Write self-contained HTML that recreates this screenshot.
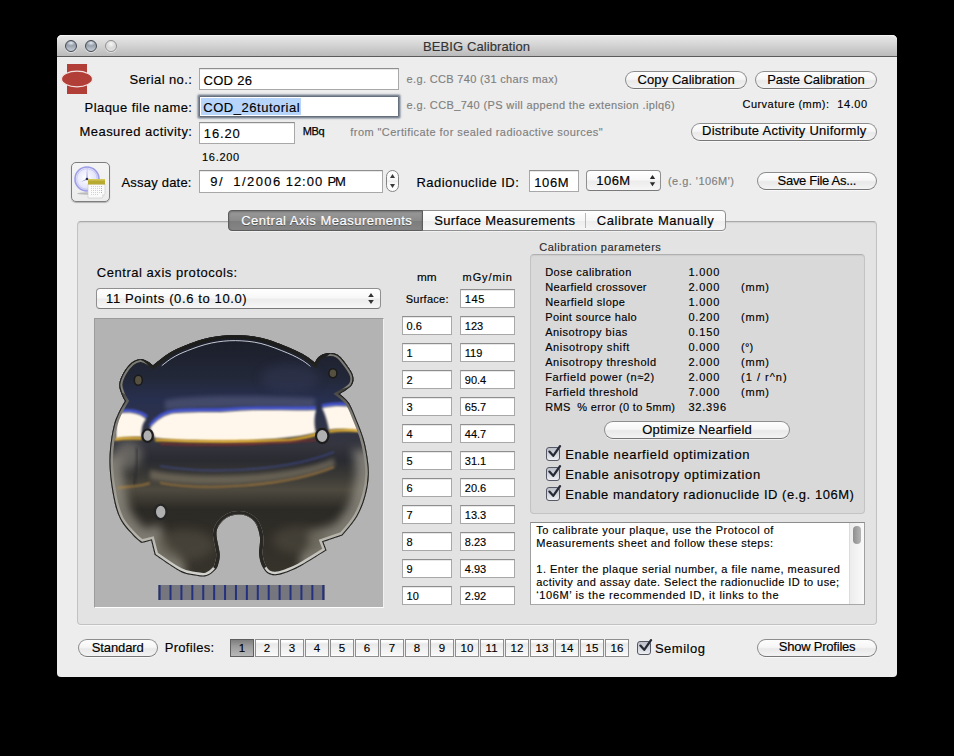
<!DOCTYPE html>
<html><head><meta charset="utf-8"><style>
html,body{margin:0;padding:0;background:#000;width:954px;height:756px;overflow:hidden;}
body{position:relative;font-family:"Liberation Sans",sans-serif;}
.t{position:absolute;white-space:pre;line-height:1;-webkit-text-stroke:0.15px currentColor;}
.a{position:absolute;box-sizing:border-box;}

.win{left:57px;top:35px;width:840px;height:642px;background:#ededed;border-radius:5px 5px 4px 4px;overflow:hidden;}
.title{left:57px;top:35px;width:840px;height:22px;border-radius:5px 5px 0 0;background:linear-gradient(#e9e9e9,#d3d3d3 50%,#bababa);border-bottom:1px solid #5a5a5a;box-shadow:inset 0 1px 0 #f6f6f6;}
.tl{width:12px;height:12px;border-radius:50%;box-sizing:border-box;border:1.3px solid #434a53;box-shadow:0 1px 0 rgba(255,255,255,.5);background:radial-gradient(ellipse 45% 28% at 50% 20%,#e8ecf2 0,rgba(230,234,240,0) 100%),linear-gradient(#7f8996,#9ca5b0 50%,#c6cdd5);}
.tl3{border-color:#909090;background:radial-gradient(circle at 50% 30%,#f6f6f6 0,#d8d8d8 50%,#ececec 100%);}
.tf{background:#fff;border:1px solid #a8a8a8;border-top-color:#8e8e8e;box-shadow:inset 0 1px 0 #e8e8e8;}
.btn{border:1px solid #8d8d8d;border-bottom-color:#777;border-radius:9px;background:linear-gradient(#fdfdfd,#f6f6f6 45%,#e9e9e9 55%,#f3f3f3);box-shadow:0 1px 0 rgba(255,255,255,.6);}
.pop{border:1px solid #8f8f8f;border-bottom-color:#7a7a7a;border-radius:4px;background:linear-gradient(#ffffff,#f8f8f8 45%,#ececec 55%,#f6f6f6);}
.cb{width:14px;height:14px;border:1px solid #555866;border-radius:3px;background:linear-gradient(#bcc0c9,#d4d7de 55%,#eceef2);}
.pb{width:24px;height:18px;border:1px solid #8e8e8e;background:linear-gradient(#ffffff 0,#ffffff 10%,#e8e8e8 25%,#f2f2f2 60%,#f6f6f6 88%,#ffffff 100%);}
.pbs{border-color:#5e5e5e;background:linear-gradient(#7e7e7e,#9c9c9c 40%,#b8b8b8);}

</style></head><body>
<div class='a win'></div><div class='a title'></div><div class='a tl' style='left:65px;top:40px'></div><div class='a tl' style='left:85px;top:40px'></div><div class='a tl tl3' style='left:105px;top:40px'></div><svg class='a' style='left:57px;top:57px' width='40' height='45' viewBox='57 57 40 45'>
<rect x='67' y='64' width='20' height='30' fill='#b13f38'/>
<ellipse cx='77' cy='79' rx='15.5' ry='7.8' fill='#b13f38' stroke='#f2e2e0' stroke-width='1.2'/>
</svg><div class='a tf' style='left:199px;top:68px;width:200px;height:22px'></div><div class='a' style='left:199px;top:96px;width:200px;height:21px;background:#fff;border:1px solid #666f7c;border-radius:1px;box-shadow:0 0 0 1px #848d99, 0 0 1.5px 2px rgba(135,145,160,.7)'></div><div class='a' style='left:201px;top:98px;width:100px;height:17px;background:#b7d4fb'></div><div class='a tf' style='left:199px;top:122px;width:96px;height:22px'></div><div class='a btn' style='left:625px;top:71px;width:122px;height:18px'></div><div class='a btn' style='left:755px;top:71px;width:122px;height:18px'></div><div class='a btn' style='left:691px;top:123px;width:186px;height:18px'></div><div class='a' style='left:71px;top:162px;width:39px;height:40px;border:1px solid #7d7d7d;border-radius:5px;background:linear-gradient(#f4f4f4,#ececec);box-shadow:0 1px 1px rgba(0,0,0,.25)'></div><svg class='a' style='left:71px;top:162px' width='39' height='40' viewBox='71 162 39 40'>
<defs><radialGradient id='clk' cx='0.45' cy='0.45' r='0.6'><stop offset='0' stop-color='#ffffff'/><stop offset='0.7' stop-color='#e4e4fa'/><stop offset='1' stop-color='#b8b8f0'/></radialGradient></defs>
<ellipse cx='87' cy='193.5' rx='10' ry='1.2' fill='#888' opacity='.5'/>
<circle cx='87' cy='179' r='12' fill='url(#clk)' stroke='#9d9de8' stroke-width='1.6'/>
<circle cx='87' cy='179' r='10.3' fill='none' stroke='#c4c4f4' stroke-width='0.8'/>
<path d='M86.3 179 L87.7 179 L87.1 167.5 Z' fill='#a0a0e0'/>
<path d='M87 178.4 L87.4 179.6 L81 182 Z' fill='#8080c8'/>
<circle cx='87' cy='179' r='1.3' fill='#303060'/>
<path d='M88 184 L105 184 L105 194 L102 198 L88 198 Z' fill='#fafafa' stroke='#c8c8c8' stroke-width='0.6'/>
<rect x='88' y='179' width='17' height='5.5' fill='#b8aa30'/>
<rect x='88' y='179' width='17' height='1.5' fill='#d4c85a'/>
<g fill='#d2d2d2' transform='translate(1 0)'>
<rect x='90' y='186' width='1' height='1'/><rect x='92' y='186' width='1' height='1'/><rect x='94' y='186' width='1' height='1'/><rect x='96' y='186' width='1' height='1'/><rect x='98' y='186' width='1' height='1'/><rect x='100' y='186' width='1' height='1' fill='#a8a8f0'/>
<rect x='90' y='188' width='1' height='1'/><rect x='92' y='188' width='1' height='1'/><rect x='94' y='188' width='1' height='1'/><rect x='96' y='188' width='1' height='1'/><rect x='98' y='188' width='1' height='1'/><rect x='100' y='188' width='1' height='1' fill='#a8a8f0'/>
<rect x='90' y='190' width='1' height='1'/><rect x='92' y='190' width='1' height='1'/><rect x='94' y='190' width='1' height='1'/><rect x='96' y='190' width='1' height='1'/><rect x='98' y='190' width='1' height='1'/><rect x='100' y='190' width='1' height='1' fill='#a8a8f0'/>
<rect x='90' y='192' width='1' height='1'/><rect x='92' y='192' width='1' height='1'/><rect x='94' y='192' width='1' height='1'/><rect x='96' y='192' width='1' height='1'/><rect x='98' y='192' width='1' height='1'/><rect x='100' y='192' width='1' height='1' fill='#a8a8f0'/>
<rect x='90' y='194' width='1' height='1'/><rect x='92' y='194' width='1' height='1'/><rect x='94' y='194' width='1' height='1'/><rect x='96' y='194' width='1' height='1'/>
</g>
<path d='M102 198 L105 194 L102 194.5 Z' fill='#e0e0e0'/>
</svg><div class='a tf' style='left:199px;top:170px;width:184px;height:23px'></div><div class='a' style='left:386px;top:170px;width:13px;height:22px;border:1px solid #858585;border-radius:6.5px;background:linear-gradient(#ffffff,#f8f8f8 45%,#ececec 50%,#f8f8f8 60%,#ffffff)'></div><svg class='a' style='left:386px;top:170px' width='13' height='22' viewBox='0 0 13 22'>
<path d='M6.5 4 L9 8 L4 8 Z' fill='#3a3a3a'/><path d='M6.5 18 L9 14 L4 14 Z' fill='#3a3a3a'/></svg><div class='a tf' style='left:529px;top:170px;width:50px;height:22px'></div><div class='a pop' style='left:586px;top:170px;width:75px;height:21px'></div><svg class='a' style='left:646px;top:172px' width='12' height='18' viewBox='0 0 12 18'>
<path d='M6.5 3 L9.2 7 L3.8 7 Z' fill='#2a2a2a'/><path d='M6.5 14.2 L9.2 10.2 L3.8 10.2 Z' fill='#2a2a2a'/></svg><div class='a btn' style='left:757px;top:172px;width:120px;height:18px'></div><div class='a' style='left:77px;top:221px;width:800px;height:404px;border:1px solid #c2c2c2;border-top-color:#a9a9a9;border-radius:4px;background:#e3e3e3;box-shadow:inset 0 1px 1px rgba(0,0,0,.08), 0 1px 0 #f6f6f6'></div><div class='a' style='left:228px;top:210px;width:498px;height:21px;border:1px solid #8f8f8f;border-radius:4px;background:linear-gradient(#ffffff,#f7f7f7 50%,#ededed 51%,#f6f6f6);box-shadow:0 1px 0 rgba(255,255,255,.5)'></div><div class='a' style='left:228px;top:210px;width:195px;height:21px;border:1px solid #5c5c5c;border-radius:4px 0 0 4px;background:linear-gradient(#9a9a9a,#8a8a8a 50%,#7c7c7c 51%,#858585);box-shadow:inset 0 1px 2px rgba(0,0,0,.25)'></div><div class='a' style='left:585px;top:213px;width:1px;height:15px;background:#b8b8b8'></div><div class='a pop' style='left:96px;top:288px;width:285px;height:21px'></div><svg class='a' style='left:366px;top:290px' width='12' height='18' viewBox='0 0 12 18'>
<path d='M5 3 L7.8 7 L2.2 7 Z' fill='#333'/><path d='M5 14 L7.8 10 L2.2 10 Z' fill='#333'/></svg><div class='a' style='left:94px;top:318px;width:290px;height:290px;border:1px solid #9b9b9b;border-bottom-color:#fdfdfd;border-right-color:#f0f0f0;background:#b3b3b3'></div><svg class='a' style='left:95px;top:319px' width='288' height='288' viewBox='95 319 288 288'>
<defs>
<clipPath id='pc'><path d='M235.3 335.0 C244.0 335.1 252.9 335.8 262.0 338.0 C271.1 340.2 282.7 345.0 290.0 348.0 C297.3 351.0 301.8 353.5 305.9 356.0 C310.0 358.5 314.9 362.8 314.9 362.8 C314.9 362.8 316.6 358.5 318.6 356.9 C320.6 355.3 323.8 353.5 327.0 353.2 C330.2 352.9 334.2 352.8 337.6 354.8 C341.0 356.8 344.5 361.9 347.1 365.4 C349.7 368.9 352.3 372.6 353.0 376.0 C353.7 379.4 353.6 382.5 351.4 385.5 C349.2 388.5 339.7 394.0 339.7 394.0 C339.7 394.0 346.4 399.0 349.3 403.5 C352.2 408.0 354.8 415.6 357.1 421.2 C359.4 426.8 361.4 431.7 363.0 437.0 C364.6 442.3 365.7 446.7 366.7 452.9 C367.7 459.1 369.0 466.9 368.8 474.0 C368.6 481.1 367.6 488.1 365.6 495.2 C363.7 502.3 361.0 509.7 357.1 516.4 C353.2 523.1 342.3 535.4 342.3 535.4 C342.3 535.4 323.3 541.8 323.3 541.8 C323.3 541.8 326.5 550.3 326.5 550.3 C326.5 550.3 306.9 562.7 300.0 566.5 C293.1 570.3 289.1 571.5 285.0 573.0 C280.9 574.5 278.1 575.2 275.3 575.3 C272.5 575.4 270.0 574.6 268.0 573.5 C266.0 572.4 264.8 570.6 263.5 568.5 C262.2 566.4 261.0 563.7 260.3 561.0 C259.6 558.3 259.2 556.1 259.1 552.2 C259.1 548.3 260.5 542.3 260.0 537.6 C259.5 532.9 258.0 527.5 256.0 524.0 C254.0 520.5 251.0 518.1 248.0 516.5 C245.0 514.9 241.5 514.4 238.2 514.5 C234.9 514.6 231.0 515.4 228.0 517.0 C225.0 518.6 221.9 521.2 220.0 524.0 C218.1 526.8 216.5 528.8 216.4 533.7 C216.3 538.6 219.3 548.6 219.7 553.5 C220.0 558.4 219.2 560.4 218.5 563.0 C217.8 565.6 217.7 567.2 215.7 569.4 C213.7 571.6 209.9 575.0 206.5 576.0 C203.1 577.0 199.4 576.3 195.0 575.5 C190.6 574.7 186.7 574.9 180.0 571.4 C173.3 567.9 154.8 554.8 154.8 554.8 C154.8 554.8 151.2 540.5 151.2 540.5 C151.2 540.5 141.7 542.9 141.7 542.9 C141.7 542.9 136.9 539.7 133.3 535.7 C129.7 531.7 123.6 525.8 120.2 519.0 C116.8 512.2 114.9 505.1 113.1 495.2 C111.3 485.3 109.3 471.4 109.5 459.5 C109.7 447.6 111.7 433.6 114.3 423.8 C116.9 414.1 125.0 401.0 125.0 401.0 C125.0 401.0 122.9 397.8 121.9 395.0 C121.0 392.2 119.0 388.1 119.3 384.4 C119.6 380.7 121.5 376.4 123.5 372.8 C125.5 369.2 128.8 365.1 131.5 362.8 C134.2 360.5 137.3 359.3 139.9 359.0 C142.5 358.7 145.1 360.1 147.3 361.2 C149.5 362.3 153.1 365.4 153.1 365.4 C153.1 365.4 163.2 356.8 168.5 353.5 C173.8 350.2 178.1 348.2 185.0 345.5 C191.9 342.8 201.6 339.2 210.0 337.5 C218.4 335.8 226.6 334.9 235.3 335.0 Z'/></clipPath>
<clipPath id='slt'><rect x='215' y='505' width='50' height='22'/></clipPath>
<mask id='lowmask' maskUnits='userSpaceOnUse' x='95' y='319' width='288' height='288'><path d='M60 455 L185 455 L185 640 L60 640 Z M300 450 L420 450 L420 640 L300 640 Z' fill='#fff' filter='url(#b4)'/></mask>
<clipPath id='tabs'><circle cx='133' cy='377' r='19'/><circle cx='340' cy='370' r='19'/></clipPath>
<clipPath id='ptop'><rect x='158' y='330' width='156' height='40'/></clipPath>
<linearGradient id='pg' x1='0' y1='335' x2='0' y2='577' gradientUnits='userSpaceOnUse'>
<stop offset='0' stop-color='#1a1d28'/>
<stop offset='0.18' stop-color='#232839'/>
<stop offset='0.27' stop-color='#283050'/>
<stop offset='0.45' stop-color='#34353e'/>
<stop offset='0.52' stop-color='#2a2b31'/>
<stop offset='0.58' stop-color='#3a3935'/>
<stop offset='0.64' stop-color='#4e4a40'/>
<stop offset='0.72' stop-color='#2c2a25'/>
<stop offset='1' stop-color='#37342c'/>
</linearGradient>
<linearGradient id='rg' x1='0' y1='335' x2='0' y2='577' gradientUnits='userSpaceOnUse'>
<stop offset='0' stop-color='#1a1a18'/>
<stop offset='0.18' stop-color='#262624'/>
<stop offset='0.32' stop-color='#7c7a74'/>
<stop offset='0.6' stop-color='#9a988e'/>
<stop offset='0.8' stop-color='#b0aea4'/>
<stop offset='1' stop-color='#d4d4d0'/>
</linearGradient>
<filter id='b1' x='-20%' y='-60%' width='140%' height='220%'><feGaussianBlur stdDeviation='1.1'/></filter>
<filter id='b2' x='-20%' y='-60%' width='140%' height='220%'><feGaussianBlur stdDeviation='2.2'/></filter>
<filter id='b4' x='-50%' y='-50%' width='200%' height='200%'><feGaussianBlur stdDeviation='5'/></filter>
</defs>
<g clip-path='url(#pc)'>
<rect x='100' y='330' width='280' height='260' fill='url(#pg)'/>
<path d='M235.3 335.0 C244.0 335.1 252.9 335.8 262.0 338.0 C271.1 340.2 282.7 345.0 290.0 348.0 C297.3 351.0 301.8 353.5 305.9 356.0 C310.0 358.5 314.9 362.8 314.9 362.8 C314.9 362.8 316.6 358.5 318.6 356.9 C320.6 355.3 323.8 353.5 327.0 353.2 C330.2 352.9 334.2 352.8 337.6 354.8 C341.0 356.8 344.5 361.9 347.1 365.4 C349.7 368.9 352.3 372.6 353.0 376.0 C353.7 379.4 353.6 382.5 351.4 385.5 C349.2 388.5 339.7 394.0 339.7 394.0 C339.7 394.0 346.4 399.0 349.3 403.5 C352.2 408.0 354.8 415.6 357.1 421.2 C359.4 426.8 361.4 431.7 363.0 437.0 C364.6 442.3 365.7 446.7 366.7 452.9 C367.7 459.1 369.0 466.9 368.8 474.0 C368.6 481.1 367.6 488.1 365.6 495.2 C363.7 502.3 361.0 509.7 357.1 516.4 C353.2 523.1 342.3 535.4 342.3 535.4 C342.3 535.4 323.3 541.8 323.3 541.8 C323.3 541.8 326.5 550.3 326.5 550.3 C326.5 550.3 306.9 562.7 300.0 566.5 C293.1 570.3 289.1 571.5 285.0 573.0 C280.9 574.5 278.1 575.2 275.3 575.3 C272.5 575.4 270.0 574.6 268.0 573.5 C266.0 572.4 264.8 570.6 263.5 568.5 C262.2 566.4 261.0 563.7 260.3 561.0 C259.6 558.3 259.2 556.1 259.1 552.2 C259.1 548.3 260.5 542.3 260.0 537.6 C259.5 532.9 258.0 527.5 256.0 524.0 C254.0 520.5 251.0 518.1 248.0 516.5 C245.0 514.9 241.5 514.4 238.2 514.5 C234.9 514.6 231.0 515.4 228.0 517.0 C225.0 518.6 221.9 521.2 220.0 524.0 C218.1 526.8 216.5 528.8 216.4 533.7 C216.3 538.6 219.3 548.6 219.7 553.5 C220.0 558.4 219.2 560.4 218.5 563.0 C217.8 565.6 217.7 567.2 215.7 569.4 C213.7 571.6 209.9 575.0 206.5 576.0 C203.1 577.0 199.4 576.3 195.0 575.5 C190.6 574.7 186.7 574.9 180.0 571.4 C173.3 567.9 154.8 554.8 154.8 554.8 C154.8 554.8 151.2 540.5 151.2 540.5 C151.2 540.5 141.7 542.9 141.7 542.9 C141.7 542.9 136.9 539.7 133.3 535.7 C129.7 531.7 123.6 525.8 120.2 519.0 C116.8 512.2 114.9 505.1 113.1 495.2 C111.3 485.3 109.3 471.4 109.5 459.5 C109.7 447.6 111.7 433.6 114.3 423.8 C116.9 414.1 125.0 401.0 125.0 401.0 C125.0 401.0 122.9 397.8 121.9 395.0 C121.0 392.2 119.0 388.1 119.3 384.4 C119.6 380.7 121.5 376.4 123.5 372.8 C125.5 369.2 128.8 365.1 131.5 362.8 C134.2 360.5 137.3 359.3 139.9 359.0 C142.5 358.7 145.1 360.1 147.3 361.2 C149.5 362.3 153.1 365.4 153.1 365.4 C153.1 365.4 163.2 356.8 168.5 353.5 C173.8 350.2 178.1 348.2 185.0 345.5 C191.9 342.8 201.6 339.2 210.0 337.5 C218.4 335.8 226.6 334.9 235.3 335.0 Z' fill='none' stroke='#98948a' stroke-width='26' opacity='.75' filter='url(#b4)' mask='url(#lowmask)'/>
<ellipse cx='128' cy='455' rx='14' ry='14' fill='#8a857a' opacity='.6' filter='url(#b4)'/>

<ellipse cx='185' cy='545' rx='30' ry='16' fill='#5a5548' opacity='.5' filter='url(#b4)'/>
<ellipse cx='300' cy='540' rx='28' ry='14' fill='#5a5548' opacity='.45' filter='url(#b4)'/>
<ellipse cx='290' cy='378' rx='30' ry='14' fill='#343b58' opacity='.45' filter='url(#b4)'/>
<path d='M165 400 C200 394 260 396 315 398 L315 408 C260 406 200 408 165 410 Z' fill='#5a6080' opacity='.55' filter='url(#b2)'/>
<path d='M150 470 C190 480 290 478 334 458 L335 466 C290 486 190 488 150 479 Z' fill='#7a7262' opacity='.7' filter='url(#b2)'/>
<path d='M160 483 C205 491 285 487 334 467' stroke='#c0883a' stroke-width='1.6' fill='none' opacity='.7' filter='url(#b1)'/>
<path d='M160 466 C205 474 285 472 334 452' stroke='#4858b8' stroke-width='1.6' fill='none' opacity='.55' filter='url(#b1)'/>
<path d='M116 412 C128 409 140 411 147 417 M150 426 C156 418 165 412 175 411 C200 409 215 411 235 409 C260 407 290 409 316 408 M322 406 C335 403 350 404 360 406' stroke='#4a5ae0' stroke-width='3.4' fill='none' opacity='.9' filter='url(#b1)'/>
<path d='M116 414 C128 411 140 413 146 419 C142 424 141 430 142 437 C135 437 125 437 116 439 Z' fill='#fff7ec' filter='url(#b1)'/>
<path d='M150 428 C156 420 165 414 175 413 C200 411 215 413 235 411 C260 409 290 411 316 410 C314 418 314 425 316 433 C290 439 250 441 230 441 C205 441 175 441 155 438 C153 434 151 431 150 428 Z' fill='#fff7ec' filter='url(#b1)'/>
<path d='M322 408 C335 405 350 406 360 408 L360 431 C345 429 335 429 329 430 C327 420 325 414 322 408 Z' fill='#fff7ec' filter='url(#b1)'/>
<path d='M114 439.5 C125 438 135 438 142 438.5 M155 440 C200 442 250 442 290 440 C305 438 312 436 317 434 M329 431.5 C340 430 352 430 360 431' stroke='#e8b22c' stroke-width='2.6' fill='none' filter='url(#b1)'/>
<path d='M160 444 C200 445.5 260 445.5 316 440' stroke='#a02a28' stroke-width='1.6' fill='none' opacity='.75' filter='url(#b1)'/>
<path d='M137 448 C138 460 136 475 134 485' stroke='#2a2a30' stroke-width='2.5' fill='none' opacity='.6' filter='url(#b1)'/>
<path d='M118 488 C125 486 135 488 150 483' stroke='#c08a3a' stroke-width='2.2' fill='none' opacity='.6' filter='url(#b1)'/>
<path d='M235.3 335.0 C244.0 335.1 252.9 335.8 262.0 338.0 C271.1 340.2 282.7 345.0 290.0 348.0 C297.3 351.0 301.8 353.5 305.9 356.0 C310.0 358.5 314.9 362.8 314.9 362.8 C314.9 362.8 316.6 358.5 318.6 356.9 C320.6 355.3 323.8 353.5 327.0 353.2 C330.2 352.9 334.2 352.8 337.6 354.8 C341.0 356.8 344.5 361.9 347.1 365.4 C349.7 368.9 352.3 372.6 353.0 376.0 C353.7 379.4 353.6 382.5 351.4 385.5 C349.2 388.5 339.7 394.0 339.7 394.0 C339.7 394.0 346.4 399.0 349.3 403.5 C352.2 408.0 354.8 415.6 357.1 421.2 C359.4 426.8 361.4 431.7 363.0 437.0 C364.6 442.3 365.7 446.7 366.7 452.9 C367.7 459.1 369.0 466.9 368.8 474.0 C368.6 481.1 367.6 488.1 365.6 495.2 C363.7 502.3 361.0 509.7 357.1 516.4 C353.2 523.1 342.3 535.4 342.3 535.4 C342.3 535.4 323.3 541.8 323.3 541.8 C323.3 541.8 326.5 550.3 326.5 550.3 C326.5 550.3 306.9 562.7 300.0 566.5 C293.1 570.3 289.1 571.5 285.0 573.0 C280.9 574.5 278.1 575.2 275.3 575.3 C272.5 575.4 270.0 574.6 268.0 573.5 C266.0 572.4 264.8 570.6 263.5 568.5 C262.2 566.4 261.0 563.7 260.3 561.0 C259.6 558.3 259.2 556.1 259.1 552.2 C259.1 548.3 260.5 542.3 260.0 537.6 C259.5 532.9 258.0 527.5 256.0 524.0 C254.0 520.5 251.0 518.1 248.0 516.5 C245.0 514.9 241.5 514.4 238.2 514.5 C234.9 514.6 231.0 515.4 228.0 517.0 C225.0 518.6 221.9 521.2 220.0 524.0 C218.1 526.8 216.5 528.8 216.4 533.7 C216.3 538.6 219.3 548.6 219.7 553.5 C220.0 558.4 219.2 560.4 218.5 563.0 C217.8 565.6 217.7 567.2 215.7 569.4 C213.7 571.6 209.9 575.0 206.5 576.0 C203.1 577.0 199.4 576.3 195.0 575.5 C190.6 574.7 186.7 574.9 180.0 571.4 C173.3 567.9 154.8 554.8 154.8 554.8 C154.8 554.8 151.2 540.5 151.2 540.5 C151.2 540.5 141.7 542.9 141.7 542.9 C141.7 542.9 136.9 539.7 133.3 535.7 C129.7 531.7 123.6 525.8 120.2 519.0 C116.8 512.2 114.9 505.1 113.1 495.2 C111.3 485.3 109.3 471.4 109.5 459.5 C109.7 447.6 111.7 433.6 114.3 423.8 C116.9 414.1 125.0 401.0 125.0 401.0 C125.0 401.0 122.9 397.8 121.9 395.0 C121.0 392.2 119.0 388.1 119.3 384.4 C119.6 380.7 121.5 376.4 123.5 372.8 C125.5 369.2 128.8 365.1 131.5 362.8 C134.2 360.5 137.3 359.3 139.9 359.0 C142.5 358.7 145.1 360.1 147.3 361.2 C149.5 362.3 153.1 365.4 153.1 365.4 C153.1 365.4 163.2 356.8 168.5 353.5 C173.8 350.2 178.1 348.2 185.0 345.5 C191.9 342.8 201.6 339.2 210.0 337.5 C218.4 335.8 226.6 334.9 235.3 335.0 Z' fill='none' stroke='url(#rg)' stroke-width='7'/>
<path d='M235.3 335.0 C244.0 335.1 252.9 335.8 262.0 338.0 C271.1 340.2 282.7 345.0 290.0 348.0 C297.3 351.0 301.8 353.5 305.9 356.0 C310.0 358.5 314.9 362.8 314.9 362.8 C314.9 362.8 316.6 358.5 318.6 356.9 C320.6 355.3 323.8 353.5 327.0 353.2 C330.2 352.9 334.2 352.8 337.6 354.8 C341.0 356.8 344.5 361.9 347.1 365.4 C349.7 368.9 352.3 372.6 353.0 376.0 C353.7 379.4 353.6 382.5 351.4 385.5 C349.2 388.5 339.7 394.0 339.7 394.0 C339.7 394.0 346.4 399.0 349.3 403.5 C352.2 408.0 354.8 415.6 357.1 421.2 C359.4 426.8 361.4 431.7 363.0 437.0 C364.6 442.3 365.7 446.7 366.7 452.9 C367.7 459.1 369.0 466.9 368.8 474.0 C368.6 481.1 367.6 488.1 365.6 495.2 C363.7 502.3 361.0 509.7 357.1 516.4 C353.2 523.1 342.3 535.4 342.3 535.4 C342.3 535.4 323.3 541.8 323.3 541.8 C323.3 541.8 326.5 550.3 326.5 550.3 C326.5 550.3 306.9 562.7 300.0 566.5 C293.1 570.3 289.1 571.5 285.0 573.0 C280.9 574.5 278.1 575.2 275.3 575.3 C272.5 575.4 270.0 574.6 268.0 573.5 C266.0 572.4 264.8 570.6 263.5 568.5 C262.2 566.4 261.0 563.7 260.3 561.0 C259.6 558.3 259.2 556.1 259.1 552.2 C259.1 548.3 260.5 542.3 260.0 537.6 C259.5 532.9 258.0 527.5 256.0 524.0 C254.0 520.5 251.0 518.1 248.0 516.5 C245.0 514.9 241.5 514.4 238.2 514.5 C234.9 514.6 231.0 515.4 228.0 517.0 C225.0 518.6 221.9 521.2 220.0 524.0 C218.1 526.8 216.5 528.8 216.4 533.7 C216.3 538.6 219.3 548.6 219.7 553.5 C220.0 558.4 219.2 560.4 218.5 563.0 C217.8 565.6 217.7 567.2 215.7 569.4 C213.7 571.6 209.9 575.0 206.5 576.0 C203.1 577.0 199.4 576.3 195.0 575.5 C190.6 574.7 186.7 574.9 180.0 571.4 C173.3 567.9 154.8 554.8 154.8 554.8 C154.8 554.8 151.2 540.5 151.2 540.5 C151.2 540.5 141.7 542.9 141.7 542.9 C141.7 542.9 136.9 539.7 133.3 535.7 C129.7 531.7 123.6 525.8 120.2 519.0 C116.8 512.2 114.9 505.1 113.1 495.2 C111.3 485.3 109.3 471.4 109.5 459.5 C109.7 447.6 111.7 433.6 114.3 423.8 C116.9 414.1 125.0 401.0 125.0 401.0 C125.0 401.0 122.9 397.8 121.9 395.0 C121.0 392.2 119.0 388.1 119.3 384.4 C119.6 380.7 121.5 376.4 123.5 372.8 C125.5 369.2 128.8 365.1 131.5 362.8 C134.2 360.5 137.3 359.3 139.9 359.0 C142.5 358.7 145.1 360.1 147.3 361.2 C149.5 362.3 153.1 365.4 153.1 365.4 C153.1 365.4 163.2 356.8 168.5 353.5 C173.8 350.2 178.1 348.2 185.0 345.5 C191.9 342.8 201.6 339.2 210.0 337.5 C218.4 335.8 226.6 334.9 235.3 335.0 Z' fill='none' stroke='#202020' stroke-width='2'/>
<path d='M263.5 568.5 C262.2 566.4 261.0 563.7 260.3 561.0 C259.6 558.3 259.2 556.1 259.1 552.2 C259.1 548.3 260.5 542.3 260.0 537.6 C259.5 532.9 258.0 527.5 256.0 524.0 C254.0 520.5 251.0 518.1 248.0 516.5 C245.0 514.9 241.5 514.4 238.2 514.5 C234.9 514.6 231.0 515.4 228.0 517.0 C225.0 518.6 221.9 521.2 220.0 524.0 C218.1 526.8 216.5 528.8 216.4 533.7 C216.3 538.6 219.3 548.6 219.7 553.5 C220.0 558.4 219.2 560.4 218.5 563.0 C217.8 565.6 217.7 567.2 215.7 569.4' fill='none' stroke='#2a2824' stroke-width='7' clip-path='url(#pc)'/>
<g clip-path='url(#tabs)'><path d='M235.3 335.0 C244.0 335.1 252.9 335.8 262.0 338.0 C271.1 340.2 282.7 345.0 290.0 348.0 C297.3 351.0 301.8 353.5 305.9 356.0 C310.0 358.5 314.9 362.8 314.9 362.8 C314.9 362.8 316.6 358.5 318.6 356.9 C320.6 355.3 323.8 353.5 327.0 353.2 C330.2 352.9 334.2 352.8 337.6 354.8 C341.0 356.8 344.5 361.9 347.1 365.4 C349.7 368.9 352.3 372.6 353.0 376.0 C353.7 379.4 353.6 382.5 351.4 385.5 C349.2 388.5 339.7 394.0 339.7 394.0 C339.7 394.0 346.4 399.0 349.3 403.5 C352.2 408.0 354.8 415.6 357.1 421.2 C359.4 426.8 361.4 431.7 363.0 437.0 C364.6 442.3 365.7 446.7 366.7 452.9 C367.7 459.1 369.0 466.9 368.8 474.0 C368.6 481.1 367.6 488.1 365.6 495.2 C363.7 502.3 361.0 509.7 357.1 516.4 C353.2 523.1 342.3 535.4 342.3 535.4 C342.3 535.4 323.3 541.8 323.3 541.8 C323.3 541.8 326.5 550.3 326.5 550.3 C326.5 550.3 306.9 562.7 300.0 566.5 C293.1 570.3 289.1 571.5 285.0 573.0 C280.9 574.5 278.1 575.2 275.3 575.3 C272.5 575.4 270.0 574.6 268.0 573.5 C266.0 572.4 264.8 570.6 263.5 568.5 C262.2 566.4 261.0 563.7 260.3 561.0 C259.6 558.3 259.2 556.1 259.1 552.2 C259.1 548.3 260.5 542.3 260.0 537.6 C259.5 532.9 258.0 527.5 256.0 524.0 C254.0 520.5 251.0 518.1 248.0 516.5 C245.0 514.9 241.5 514.4 238.2 514.5 C234.9 514.6 231.0 515.4 228.0 517.0 C225.0 518.6 221.9 521.2 220.0 524.0 C218.1 526.8 216.5 528.8 216.4 533.7 C216.3 538.6 219.3 548.6 219.7 553.5 C220.0 558.4 219.2 560.4 218.5 563.0 C217.8 565.6 217.7 567.2 215.7 569.4 C213.7 571.6 209.9 575.0 206.5 576.0 C203.1 577.0 199.4 576.3 195.0 575.5 C190.6 574.7 186.7 574.9 180.0 571.4 C173.3 567.9 154.8 554.8 154.8 554.8 C154.8 554.8 151.2 540.5 151.2 540.5 C151.2 540.5 141.7 542.9 141.7 542.9 C141.7 542.9 136.9 539.7 133.3 535.7 C129.7 531.7 123.6 525.8 120.2 519.0 C116.8 512.2 114.9 505.1 113.1 495.2 C111.3 485.3 109.3 471.4 109.5 459.5 C109.7 447.6 111.7 433.6 114.3 423.8 C116.9 414.1 125.0 401.0 125.0 401.0 C125.0 401.0 122.9 397.8 121.9 395.0 C121.0 392.2 119.0 388.1 119.3 384.4 C119.6 380.7 121.5 376.4 123.5 372.8 C125.5 369.2 128.8 365.1 131.5 362.8 C134.2 360.5 137.3 359.3 139.9 359.0 C142.5 358.7 145.1 360.1 147.3 361.2 C149.5 362.3 153.1 365.4 153.1 365.4 C153.1 365.4 163.2 356.8 168.5 353.5 C173.8 350.2 178.1 348.2 185.0 345.5 C191.9 342.8 201.6 339.2 210.0 337.5 C218.4 335.8 226.6 334.9 235.3 335.0 Z' fill='none' stroke='#8c8c88' stroke-width='6' opacity='.85'/><path d='M235.3 335.0 C244.0 335.1 252.9 335.8 262.0 338.0 C271.1 340.2 282.7 345.0 290.0 348.0 C297.3 351.0 301.8 353.5 305.9 356.0 C310.0 358.5 314.9 362.8 314.9 362.8 C314.9 362.8 316.6 358.5 318.6 356.9 C320.6 355.3 323.8 353.5 327.0 353.2 C330.2 352.9 334.2 352.8 337.6 354.8 C341.0 356.8 344.5 361.9 347.1 365.4 C349.7 368.9 352.3 372.6 353.0 376.0 C353.7 379.4 353.6 382.5 351.4 385.5 C349.2 388.5 339.7 394.0 339.7 394.0 C339.7 394.0 346.4 399.0 349.3 403.5 C352.2 408.0 354.8 415.6 357.1 421.2 C359.4 426.8 361.4 431.7 363.0 437.0 C364.6 442.3 365.7 446.7 366.7 452.9 C367.7 459.1 369.0 466.9 368.8 474.0 C368.6 481.1 367.6 488.1 365.6 495.2 C363.7 502.3 361.0 509.7 357.1 516.4 C353.2 523.1 342.3 535.4 342.3 535.4 C342.3 535.4 323.3 541.8 323.3 541.8 C323.3 541.8 326.5 550.3 326.5 550.3 C326.5 550.3 306.9 562.7 300.0 566.5 C293.1 570.3 289.1 571.5 285.0 573.0 C280.9 574.5 278.1 575.2 275.3 575.3 C272.5 575.4 270.0 574.6 268.0 573.5 C266.0 572.4 264.8 570.6 263.5 568.5 C262.2 566.4 261.0 563.7 260.3 561.0 C259.6 558.3 259.2 556.1 259.1 552.2 C259.1 548.3 260.5 542.3 260.0 537.6 C259.5 532.9 258.0 527.5 256.0 524.0 C254.0 520.5 251.0 518.1 248.0 516.5 C245.0 514.9 241.5 514.4 238.2 514.5 C234.9 514.6 231.0 515.4 228.0 517.0 C225.0 518.6 221.9 521.2 220.0 524.0 C218.1 526.8 216.5 528.8 216.4 533.7 C216.3 538.6 219.3 548.6 219.7 553.5 C220.0 558.4 219.2 560.4 218.5 563.0 C217.8 565.6 217.7 567.2 215.7 569.4 C213.7 571.6 209.9 575.0 206.5 576.0 C203.1 577.0 199.4 576.3 195.0 575.5 C190.6 574.7 186.7 574.9 180.0 571.4 C173.3 567.9 154.8 554.8 154.8 554.8 C154.8 554.8 151.2 540.5 151.2 540.5 C151.2 540.5 141.7 542.9 141.7 542.9 C141.7 542.9 136.9 539.7 133.3 535.7 C129.7 531.7 123.6 525.8 120.2 519.0 C116.8 512.2 114.9 505.1 113.1 495.2 C111.3 485.3 109.3 471.4 109.5 459.5 C109.7 447.6 111.7 433.6 114.3 423.8 C116.9 414.1 125.0 401.0 125.0 401.0 C125.0 401.0 122.9 397.8 121.9 395.0 C121.0 392.2 119.0 388.1 119.3 384.4 C119.6 380.7 121.5 376.4 123.5 372.8 C125.5 369.2 128.8 365.1 131.5 362.8 C134.2 360.5 137.3 359.3 139.9 359.0 C142.5 358.7 145.1 360.1 147.3 361.2 C149.5 362.3 153.1 365.4 153.1 365.4 C153.1 365.4 163.2 356.8 168.5 353.5 C173.8 350.2 178.1 348.2 185.0 345.5 C191.9 342.8 201.6 339.2 210.0 337.5 C218.4 335.8 226.6 334.9 235.3 335.0 Z' fill='none' stroke='#1c1c1a' stroke-width='2'/></g>
<path d='M263.5 568.5 C262.2 566.4 261.0 563.7 260.3 561.0 C259.6 558.3 259.2 556.1 259.1 552.2 C259.1 548.3 260.5 542.3 260.0 537.6 C259.5 532.9 258.0 527.5 256.0 524.0 C254.0 520.5 251.0 518.1 248.0 516.5 C245.0 514.9 241.5 514.4 238.2 514.5 C234.9 514.6 231.0 515.4 228.0 517.0 C225.0 518.6 221.9 521.2 220.0 524.0 C218.1 526.8 216.5 528.8 216.4 533.7 C216.3 538.6 219.3 548.6 219.7 553.5 C220.0 558.4 219.2 560.4 218.5 563.0 C217.8 565.6 217.7 567.2 215.7 569.4' fill='none' stroke='#8a8a84' stroke-width='1.2' opacity='.6' clip-path='url(#slt)'/>
</g>
<path d='M235.3 335.0 C244.0 335.1 252.9 335.8 262.0 338.0 C271.1 340.2 282.7 345.0 290.0 348.0 C297.3 351.0 301.8 353.5 305.9 356.0 C310.0 358.5 314.9 362.8 314.9 362.8 C314.9 362.8 316.6 358.5 318.6 356.9 C320.6 355.3 323.8 353.5 327.0 353.2 C330.2 352.9 334.2 352.8 337.6 354.8 C341.0 356.8 344.5 361.9 347.1 365.4 C349.7 368.9 352.3 372.6 353.0 376.0 C353.7 379.4 353.6 382.5 351.4 385.5 C349.2 388.5 339.7 394.0 339.7 394.0 C339.7 394.0 346.4 399.0 349.3 403.5 C352.2 408.0 354.8 415.6 357.1 421.2 C359.4 426.8 361.4 431.7 363.0 437.0 C364.6 442.3 365.7 446.7 366.7 452.9 C367.7 459.1 369.0 466.9 368.8 474.0 C368.6 481.1 367.6 488.1 365.6 495.2 C363.7 502.3 361.0 509.7 357.1 516.4 C353.2 523.1 342.3 535.4 342.3 535.4 C342.3 535.4 323.3 541.8 323.3 541.8 C323.3 541.8 326.5 550.3 326.5 550.3 C326.5 550.3 306.9 562.7 300.0 566.5 C293.1 570.3 289.1 571.5 285.0 573.0 C280.9 574.5 278.1 575.2 275.3 575.3 C272.5 575.4 270.0 574.6 268.0 573.5 C266.0 572.4 264.8 570.6 263.5 568.5 C262.2 566.4 261.0 563.7 260.3 561.0 C259.6 558.3 259.2 556.1 259.1 552.2 C259.1 548.3 260.5 542.3 260.0 537.6 C259.5 532.9 258.0 527.5 256.0 524.0 C254.0 520.5 251.0 518.1 248.0 516.5 C245.0 514.9 241.5 514.4 238.2 514.5 C234.9 514.6 231.0 515.4 228.0 517.0 C225.0 518.6 221.9 521.2 220.0 524.0 C218.1 526.8 216.5 528.8 216.4 533.7 C216.3 538.6 219.3 548.6 219.7 553.5 C220.0 558.4 219.2 560.4 218.5 563.0 C217.8 565.6 217.7 567.2 215.7 569.4 C213.7 571.6 209.9 575.0 206.5 576.0 C203.1 577.0 199.4 576.3 195.0 575.5 C190.6 574.7 186.7 574.9 180.0 571.4 C173.3 567.9 154.8 554.8 154.8 554.8 C154.8 554.8 151.2 540.5 151.2 540.5 C151.2 540.5 141.7 542.9 141.7 542.9 C141.7 542.9 136.9 539.7 133.3 535.7 C129.7 531.7 123.6 525.8 120.2 519.0 C116.8 512.2 114.9 505.1 113.1 495.2 C111.3 485.3 109.3 471.4 109.5 459.5 C109.7 447.6 111.7 433.6 114.3 423.8 C116.9 414.1 125.0 401.0 125.0 401.0 C125.0 401.0 122.9 397.8 121.9 395.0 C121.0 392.2 119.0 388.1 119.3 384.4 C119.6 380.7 121.5 376.4 123.5 372.8 C125.5 369.2 128.8 365.1 131.5 362.8 C134.2 360.5 137.3 359.3 139.9 359.0 C142.5 358.7 145.1 360.1 147.3 361.2 C149.5 362.3 153.1 365.4 153.1 365.4 C153.1 365.4 163.2 356.8 168.5 353.5 C173.8 350.2 178.1 348.2 185.0 345.5 C191.9 342.8 201.6 339.2 210.0 337.5 C218.4 335.8 226.6 334.9 235.3 335.0 Z' fill='none' stroke='#eef2fa' stroke-width='1' opacity='.85' clip-path='url(#ptop)' transform='translate(238 455) scale(0.953) translate(-238 -455)'/>
<ellipse cx='147.6' cy='435.7' rx='5.2' ry='6.2' fill='#b0b0b0' stroke='#1e1e1e' stroke-width='2.2'/>
<ellipse cx='322.2' cy='436' rx='6.2' ry='7.2' fill='#b0b0b0' stroke='#1e1e1e' stroke-width='2.2'/>
<ellipse cx='160.7' cy='511.9' rx='5.8' ry='7.2' fill='#b0b0b0' stroke='#262626' stroke-width='2.2'/>
<ellipse cx='138.3' cy='380.2' rx='4' ry='5' fill='#555040' stroke='#1a1a1a' stroke-width='1.5'/>
<ellipse cx='332.9' cy='373.3' rx='4' ry='4.5' fill='#555040' stroke='#1a1a1a' stroke-width='1.5'/>
</svg>
<svg class='a' style='left:158px;top:585px' width='167' height='15' viewBox='0 0 167 15'><rect width='167' height='15' fill='#76767f'/><rect x='0.60' y='0' width='2' height='15' fill='#24327e'/><rect x='11.51' y='0' width='2' height='15' fill='#24327e'/><rect x='22.42' y='0' width='2' height='15' fill='#24327e'/><rect x='33.33' y='0' width='2' height='15' fill='#24327e'/><rect x='44.24' y='0' width='2' height='15' fill='#24327e'/><rect x='55.15' y='0' width='2' height='15' fill='#24327e'/><rect x='66.06' y='0' width='2' height='15' fill='#24327e'/><rect x='76.97' y='0' width='2' height='15' fill='#24327e'/><rect x='87.88' y='0' width='2' height='15' fill='#24327e'/><rect x='98.79' y='0' width='2' height='15' fill='#24327e'/><rect x='109.70' y='0' width='2' height='15' fill='#24327e'/><rect x='120.61' y='0' width='2' height='15' fill='#24327e'/><rect x='131.52' y='0' width='2' height='15' fill='#24327e'/><rect x='142.43' y='0' width='2' height='15' fill='#24327e'/><rect x='153.34' y='0' width='2' height='15' fill='#24327e'/><rect x='164.25' y='0' width='2' height='15' fill='#24327e'/></svg><div class='a tf' style='left:460px;top:289px;width:55px;height:19px'></div><div class='a tf' style='left:402px;top:316px;width:50px;height:19px'></div><div class='a tf' style='left:460px;top:316px;width:55px;height:19px'></div><div class='a tf' style='left:402px;top:343px;width:50px;height:19px'></div><div class='a tf' style='left:460px;top:343px;width:55px;height:19px'></div><div class='a tf' style='left:402px;top:370px;width:50px;height:19px'></div><div class='a tf' style='left:460px;top:370px;width:55px;height:19px'></div><div class='a tf' style='left:402px;top:397px;width:50px;height:19px'></div><div class='a tf' style='left:460px;top:397px;width:55px;height:19px'></div><div class='a tf' style='left:402px;top:424px;width:50px;height:19px'></div><div class='a tf' style='left:460px;top:424px;width:55px;height:19px'></div><div class='a tf' style='left:402px;top:451px;width:50px;height:19px'></div><div class='a tf' style='left:460px;top:451px;width:55px;height:19px'></div><div class='a tf' style='left:402px;top:478px;width:50px;height:19px'></div><div class='a tf' style='left:460px;top:478px;width:55px;height:19px'></div><div class='a tf' style='left:402px;top:505px;width:50px;height:19px'></div><div class='a tf' style='left:460px;top:505px;width:55px;height:19px'></div><div class='a tf' style='left:402px;top:532px;width:50px;height:19px'></div><div class='a tf' style='left:460px;top:532px;width:55px;height:19px'></div><div class='a tf' style='left:402px;top:559px;width:50px;height:19px'></div><div class='a tf' style='left:460px;top:559px;width:55px;height:19px'></div><div class='a tf' style='left:402px;top:586px;width:50px;height:19px'></div><div class='a tf' style='left:460px;top:586px;width:55px;height:19px'></div><div class='a' style='left:530px;top:254px;width:335px;height:260px;border:1px solid #c3c3c3;border-top-color:#b0b0b0;border-radius:4px;background:#d9d9d9;box-shadow:inset 0 1px 1px rgba(0,0,0,.06)'></div><div class='a btn' style='left:604px;top:421px;width:186px;height:18px'></div><div class='a cb' style='left:546px;top:447px'></div><div class='a cb' style='left:546px;top:467px'></div><div class='a cb' style='left:546px;top:487px'></div><div class='a' style='left:530px;top:522px;width:335px;height:83px;border:1px solid #a0a0a0;border-top-color:#8c8c8c;background:#fff'></div><div class='a' style='left:849px;top:523px;width:15px;height:81px;background:linear-gradient(90deg,#ececec,#fafafa);border-left:1px solid #dcdcdc'></div><div class='a' style='left:853px;top:526px;width:8px;height:18px;border-radius:4px;background:linear-gradient(90deg,#8f8f8f,#b5b5b5);'></div><div class='a btn' style='left:78px;top:639px;width:80px;height:18px'></div><div class='a pb pbs' style='left:230px;top:639px'></div><div class='a pb' style='left:255px;top:639px'></div><div class='a pb' style='left:280px;top:639px'></div><div class='a pb' style='left:305px;top:639px'></div><div class='a pb' style='left:330px;top:639px'></div><div class='a pb' style='left:355px;top:639px'></div><div class='a pb' style='left:380px;top:639px'></div><div class='a pb' style='left:405px;top:639px'></div><div class='a pb' style='left:430px;top:639px'></div><div class='a pb' style='left:455px;top:639px'></div><div class='a pb' style='left:480px;top:639px'></div><div class='a pb' style='left:505px;top:639px'></div><div class='a pb' style='left:530px;top:639px'></div><div class='a pb' style='left:555px;top:639px'></div><div class='a pb' style='left:580px;top:639px'></div><div class='a pb' style='left:605px;top:639px'></div><div class='a cb' style='left:637px;top:641px'></div><div class='a btn' style='left:757px;top:639px;width:120px;height:18px'></div>
<div class=t style='left:423.0px;top:39.90px;font-size:13px;color:#333333;letter-spacing:0.093px;'>BEBIG Calibration</div><div class=t style='left:129.4px;top:72.80px;font-size:13px;color:#000;letter-spacing:0.383px;'>Serial no.:</div><div class=t style='left:84.6px;top:100.60px;font-size:13px;color:#000;letter-spacing:0.433px;'>Plaque file name:</div><div class=t style='left:79.5px;top:125.10px;font-size:13px;color:#000;letter-spacing:0.454px;'>Measured activity:</div><div class=t style='left:203.5px;top:73.60px;font-size:13px;color:#000;letter-spacing:0.302px;'>COD 26</div><div class=t style='left:203.3px;top:101.10px;font-size:13px;color:#000;letter-spacing:0.521px;'>COD_26tutorial</div><div class=t style='left:203.8px;top:127.10px;font-size:13px;color:#000;letter-spacing:0.858px;'>16.20</div><div class=t style='left:302.7px;top:126.29px;font-size:11px;color:#000;letter-spacing:-0.283px;-webkit-text-stroke:0.25px #000;'>MBq</div><div class=t style='left:350.3px;top:127.49px;font-size:11px;color:#7f7f7f;letter-spacing:0.433px;'>from &quot;Certificate for sealed radioactive sources&quot;</div><div class=t style='left:202.0px;top:152.29px;font-size:11px;color:#000;letter-spacing:0.701px;'>16.200</div><div class=t style='left:406.6px;top:73.89px;font-size:11px;color:#7f7f7f;letter-spacing:0.331px;'>e.g. CCB 740 (31 chars max)</div><div class=t style='left:406.6px;top:99.69px;font-size:11px;color:#7f7f7f;letter-spacing:0.366px;'>e.g. CCB_740 (PS will append the extension .iplq6)</div><div class=t style='left:637.6px;top:73.00px;font-size:13px;color:#000;letter-spacing:0.065px;'>Copy Calibration</div><div class=t style='left:767.2px;top:73.00px;font-size:13px;color:#000;letter-spacing:-0.095px;'>Paste Calibration</div><div class=t style='left:742.5px;top:99.29px;font-size:11px;color:#000;letter-spacing:0.464px;'>Curvature (mm):</div><div class=t style='left:837.2px;top:99.29px;font-size:11px;color:#000;letter-spacing:0.632px;'>14.00</div><div class=t style='left:702.0px;top:124.30px;font-size:13px;color:#000;letter-spacing:0.243px;'>Distribute Activity Uniformly</div><div class=t style='left:121.5px;top:175.90px;font-size:13px;color:#000;letter-spacing:0.204px;'>Assay date:</div><div class=t style='left:210.2px;top:175.40px;font-size:13px;color:#000;letter-spacing:1.536px;'>9/</div><div class=t style='left:233.3px;top:175.40px;font-size:13px;color:#000;letter-spacing:1.423px;'>1/2006</div><div class=t style='left:285.7px;top:175.40px;font-size:13px;color:#000;letter-spacing:0.983px;'>12:00</div><div class=t style='left:327.6px;top:175.40px;font-size:13px;color:#000;letter-spacing:-1.320px;'>PM</div><div class=t style='left:416.4px;top:175.70px;font-size:13px;color:#000;letter-spacing:0.466px;'>Radionuclide ID:</div><div class=t style='left:534.3px;top:175.80px;font-size:13px;color:#000;letter-spacing:0.583px;'>106M</div><div class=t style='left:596.3px;top:173.80px;font-size:13px;color:#000;letter-spacing:0.450px;'>106M</div><div class=t style='left:668.0px;top:175.99px;font-size:11px;color:#7f7f7f;letter-spacing:0.459px;'>(e.g. &#x27;106M&#x27;)</div><div class=t style='left:777.6px;top:173.60px;font-size:13px;color:#000;letter-spacing:-0.308px;'>Save File As...</div><div class=t style='left:241.2px;top:213.60px;font-size:13px;color:#ffffff;letter-spacing:0.484px;text-shadow:0 1px 0 rgba(0,0,0,.35);'>Central Axis Measurements</div><div class=t style='left:434.2px;top:213.60px;font-size:13px;color:#000;letter-spacing:0.341px;'>Surface Measurements</div><div class=t style='left:596.8px;top:213.60px;font-size:13px;color:#000;letter-spacing:0.548px;'>Calibrate Manually</div><div class=t style='left:96.8px;top:266.10px;font-size:13px;color:#000;letter-spacing:0.534px;'>Central axis protocols:</div><div class=t style='left:106.1px;top:292.00px;font-size:13px;color:#000;letter-spacing:0.619px;'>11 Points (0.6 to 10.0)</div><div class=t style='left:417.0px;top:271.61px;font-size:11.8px;color:#000;'>mm</div><div class=t style='left:462.6px;top:272.29px;font-size:11px;color:#000;letter-spacing:0.893px;'>mGy/min</div><div class=t style='left:405.7px;top:293.59px;font-size:11px;color:#000;letter-spacing:0.256px;'>Surface:</div><div class=t style='left:464.8px;top:293.59px;font-size:11px;color:#000;letter-spacing:0.550px;'>145</div><div class=t style='left:406.6px;top:320.79px;font-size:11px;color:#000;'>0.6</div><div class=t style='left:464.8px;top:320.79px;font-size:11px;color:#000;'>123</div><div class=t style='left:406.6px;top:347.79px;font-size:11px;color:#000;'>1</div><div class=t style='left:464.8px;top:347.79px;font-size:11px;color:#000;'>119</div><div class=t style='left:406.6px;top:374.79px;font-size:11px;color:#000;'>2</div><div class=t style='left:464.8px;top:374.79px;font-size:11px;color:#000;'>90.4</div><div class=t style='left:406.6px;top:401.79px;font-size:11px;color:#000;'>3</div><div class=t style='left:464.8px;top:401.79px;font-size:11px;color:#000;'>65.7</div><div class=t style='left:406.6px;top:428.79px;font-size:11px;color:#000;'>4</div><div class=t style='left:464.8px;top:428.79px;font-size:11px;color:#000;'>44.7</div><div class=t style='left:406.6px;top:455.79px;font-size:11px;color:#000;'>5</div><div class=t style='left:464.8px;top:455.79px;font-size:11px;color:#000;'>31.1</div><div class=t style='left:406.6px;top:482.79px;font-size:11px;color:#000;'>6</div><div class=t style='left:464.8px;top:482.79px;font-size:11px;color:#000;'>20.6</div><div class=t style='left:406.6px;top:509.79px;font-size:11px;color:#000;'>7</div><div class=t style='left:464.8px;top:509.79px;font-size:11px;color:#000;'>13.3</div><div class=t style='left:406.6px;top:536.79px;font-size:11px;color:#000;'>8</div><div class=t style='left:464.8px;top:536.79px;font-size:11px;color:#000;'>8.23</div><div class=t style='left:406.6px;top:563.79px;font-size:11px;color:#000;'>9</div><div class=t style='left:464.8px;top:563.79px;font-size:11px;color:#000;'>4.93</div><div class=t style='left:406.6px;top:590.79px;font-size:11px;color:#000;'>10</div><div class=t style='left:464.8px;top:590.79px;font-size:11px;color:#000;'>2.92</div><div class=t style='left:539.3px;top:242.29px;font-size:11px;color:#2a2a2a;letter-spacing:0.489px;'>Calibration parameters</div><div class=t style='left:545.2px;top:266.99px;font-size:11px;color:#000;letter-spacing:0.479px;'>Dose calibration</div><div class=t style='left:688.4px;top:266.99px;font-size:11px;color:#000;letter-spacing:0.832px;'>1.000</div><div class=t style='left:545.2px;top:281.96px;font-size:11px;color:#000;letter-spacing:0.366px;'>Nearfield crossover</div><div class=t style='left:688.4px;top:281.96px;font-size:11px;color:#000;letter-spacing:0.832px;'>2.000</div><div class=t style='left:741.1px;top:281.96px;font-size:11px;color:#000;letter-spacing:0.735px;'>(mm)</div><div class=t style='left:545.2px;top:296.93px;font-size:11px;color:#000;letter-spacing:0.456px;'>Nearfield slope</div><div class=t style='left:688.4px;top:296.93px;font-size:11px;color:#000;letter-spacing:0.832px;'>1.000</div><div class=t style='left:545.2px;top:311.90px;font-size:11px;color:#000;letter-spacing:0.404px;'>Point source halo</div><div class=t style='left:688.4px;top:311.90px;font-size:11px;color:#000;letter-spacing:0.832px;'>0.200</div><div class=t style='left:741.1px;top:311.90px;font-size:11px;color:#000;letter-spacing:0.735px;'>(mm)</div><div class=t style='left:545.2px;top:326.87px;font-size:11px;color:#000;letter-spacing:0.489px;'>Anisotropy bias</div><div class=t style='left:688.4px;top:326.87px;font-size:11px;color:#000;letter-spacing:0.832px;'>0.150</div><div class=t style='left:545.2px;top:341.84px;font-size:11px;color:#000;letter-spacing:0.597px;'>Anisotropy shift</div><div class=t style='left:688.4px;top:341.84px;font-size:11px;color:#000;letter-spacing:0.832px;'>0.000</div><div class=t style='left:741.1px;top:341.84px;font-size:11px;color:#000;letter-spacing:0.213px;'>(°)</div><div class=t style='left:545.2px;top:356.81px;font-size:11px;color:#000;letter-spacing:0.567px;'>Anisotropy threshold</div><div class=t style='left:688.4px;top:356.81px;font-size:11px;color:#000;letter-spacing:0.832px;'>2.000</div><div class=t style='left:741.1px;top:356.81px;font-size:11px;color:#000;letter-spacing:0.735px;'>(mm)</div><div class=t style='left:545.2px;top:371.78px;font-size:11px;color:#000;letter-spacing:0.558px;'>Farfield power (n≈2)</div><div class=t style='left:688.4px;top:371.78px;font-size:11px;color:#000;letter-spacing:0.832px;'>2.000</div><div class=t style='left:741.1px;top:371.78px;font-size:11px;color:#000;letter-spacing:1.000px;'>(1 / r^n)</div><div class=t style='left:545.2px;top:386.75px;font-size:11px;color:#000;letter-spacing:0.456px;'>Farfield threshold</div><div class=t style='left:688.4px;top:386.75px;font-size:11px;color:#000;letter-spacing:0.832px;'>7.000</div><div class=t style='left:741.1px;top:386.75px;font-size:11px;color:#000;letter-spacing:0.735px;'>(mm)</div><div class=t style='left:545.2px;top:401.72px;font-size:11px;color:#000;letter-spacing:0.318px;'>RMS  % error (0 to 5mm)</div><div class=t style='left:688.4px;top:401.72px;font-size:11px;color:#000;letter-spacing:0.801px;'>32.396</div><div class=t style='left:642.3px;top:422.90px;font-size:13px;color:#000;letter-spacing:0.150px;'>Optimize Nearfield</div><div class=t style='left:565.2px;top:447.70px;font-size:13px;color:#000;letter-spacing:0.619px;'>Enable nearfield optimization</div><div class=t style='left:565.2px;top:467.70px;font-size:13px;color:#000;letter-spacing:0.618px;'>Enable anisotropy optimization</div><div class=t style='left:565.2px;top:487.70px;font-size:13px;color:#000;letter-spacing:0.529px;'>Enable mandatory radionuclide ID (e.g. 106M)</div><div class=t style='left:536.3px;top:524.59px;font-size:11px;color:#000;letter-spacing:0.510px;'>To calibrate your plaque, use the Protocol of</div><div class=t style='left:536.3px;top:537.59px;font-size:11px;color:#000;letter-spacing:0.463px;'>Measurements sheet and follow these steps:</div><div class=t style='left:536.3px;top:563.59px;font-size:11px;color:#000;letter-spacing:0.483px;'>1. Enter the plaque serial number, a file name, measured</div><div class=t style='left:536.3px;top:576.59px;font-size:11px;color:#000;letter-spacing:0.414px;'>activity and assay date. Select the radionuclide ID to use;</div><div class=t style='left:536.3px;top:589.59px;font-size:11px;color:#000;letter-spacing:0.596px;'>‘106M’ is the recommended ID, it links to the</div><div class=t style='left:536.3px;top:602.59px;font-size:11px;color:#000;letter-spacing:0.5px;'>‘ISCCB106M.iplq6’ sensitivity file that has the</div><div class=t style='left:91.8px;top:640.60px;font-size:13px;color:#000;letter-spacing:-0.127px;'>Standard</div><div class=t style='left:164.7px;top:640.60px;font-size:13px;color:#000;letter-spacing:0.314px;'>Profiles:</div><div class=t style='left:238.8px;top:643.07px;font-size:11.5px;color:#000;'>1</div><div class=t style='left:263.8px;top:643.07px;font-size:11.5px;color:#000;'>2</div><div class=t style='left:288.8px;top:643.07px;font-size:11.5px;color:#000;'>3</div><div class=t style='left:313.8px;top:643.07px;font-size:11.5px;color:#000;'>4</div><div class=t style='left:338.8px;top:643.07px;font-size:11.5px;color:#000;'>5</div><div class=t style='left:363.8px;top:643.07px;font-size:11.5px;color:#000;'>6</div><div class=t style='left:388.8px;top:643.07px;font-size:11.5px;color:#000;'>7</div><div class=t style='left:413.8px;top:643.07px;font-size:11.5px;color:#000;'>8</div><div class=t style='left:438.8px;top:643.07px;font-size:11.5px;color:#000;'>9</div><div class=t style='left:460.6px;top:643.07px;font-size:11.5px;color:#000;'>10</div><div class=t style='left:485.6px;top:643.07px;font-size:11.5px;color:#000;'>11</div><div class=t style='left:510.6px;top:643.07px;font-size:11.5px;color:#000;'>12</div><div class=t style='left:535.6px;top:643.07px;font-size:11.5px;color:#000;'>13</div><div class=t style='left:560.6px;top:643.07px;font-size:11.5px;color:#000;'>14</div><div class=t style='left:585.6px;top:643.07px;font-size:11.5px;color:#000;'>15</div><div class=t style='left:610.6px;top:643.07px;font-size:11.5px;color:#000;'>16</div><div class=t style='left:654.9px;top:642.10px;font-size:13px;color:#000;letter-spacing:0.519px;'>Semilog</div><div class=t style='left:778.8px;top:640.00px;font-size:13px;color:#000;letter-spacing:-0.225px;'>Show Profiles</div>
<svg class='a' style='left:546px;top:445px' width='16' height='16' viewBox='0 0 16 16'><path d='M3.4 6.6 L7.2 10.8 L14 1.2' fill='none' stroke='#252a36' stroke-width='2.3' stroke-linecap='round' stroke-linejoin='round'/></svg><svg class='a' style='left:546px;top:465px' width='16' height='16' viewBox='0 0 16 16'><path d='M3.4 6.6 L7.2 10.8 L14 1.2' fill='none' stroke='#252a36' stroke-width='2.3' stroke-linecap='round' stroke-linejoin='round'/></svg><svg class='a' style='left:546px;top:485px' width='16' height='16' viewBox='0 0 16 16'><path d='M3.4 6.6 L7.2 10.8 L14 1.2' fill='none' stroke='#252a36' stroke-width='2.3' stroke-linecap='round' stroke-linejoin='round'/></svg><div class='a' style='left:530px;top:604px;width:335px;height:1px;background:#a8a8a8'></div><div class='a' style='left:530px;top:605px;width:335px;height:9px;background:#e3e3e3'></div><svg class='a' style='left:637px;top:639px' width='16' height='16' viewBox='0 0 16 16'><path d='M3.4 6.6 L7.2 10.8 L14 1.2' fill='none' stroke='#252a36' stroke-width='2.3' stroke-linecap='round' stroke-linejoin='round'/></svg>
</body></html>
